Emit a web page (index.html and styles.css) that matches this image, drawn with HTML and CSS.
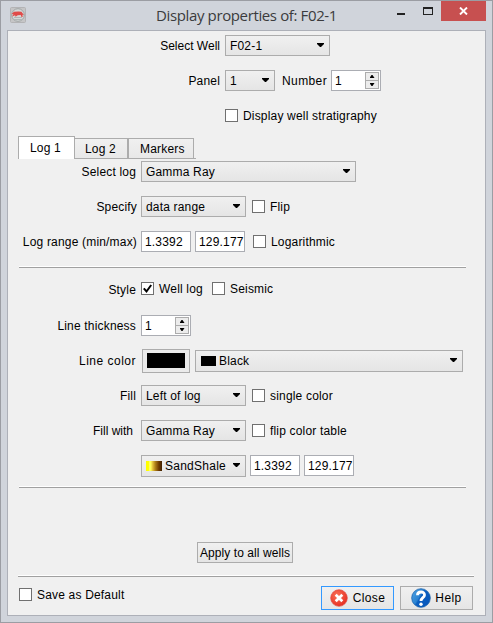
FILE: index.html
```html
<!DOCTYPE html>
<html lang="en">
<head>
<meta charset="utf-8">
<title>Display properties of: F02-1</title>
<link rel="stylesheet" href="styles.css">
</head>
<body>
<div class="window">
  <header class="titlebar">
    <svg class="app-icon" width="16" height="16" viewBox="0 0 16 16">
      <rect x=".5" y=".5" width="15" height="15" rx="1" fill="#c5c5c6" stroke="#b3b3b5"/>
      <circle cx="8" cy="8" r="6.3" fill="#d4d8d8" stroke="#a0a5a5"/>
      <path d="M3.500 12.500h9M4 10.500h8" stroke="#b0b6b6" fill="none"/>
      <path d="M1.500 7L4 4.800l4.500-.3 3 .2 2.500 3.500-1.600-.4.300 2.200h-1.200l-.8-2-3 .2-2.200 1.600-.4-1.500L2 9.600l1.500-2.300z" fill="#e04b49"/>
    </svg>
    <h1 class="title">Display properties of: F02-1</h1>
    <div class="controls">
      <svg width="37" height="20" viewBox="0 0 37 20" shape-rendering="crispEdges"><path d="M0 13h8v2H0z" fill="#222"/><path d="M26 7h10v8H26z" fill="#222"/><path d="M27 9h8v5H27z" fill="#d0d4db"/></svg>
      <div class="win-close"><svg width="9" height="8" viewBox="0 0 9 8"><path d="M1 .5l7 7M8 .5l-7 7" stroke="#fff" stroke-width="1.900"/></svg></div>
    </div>
  </header>
  <main class="client">
    <section class="group well">
      <div class="row"><span class="label plain">Select Well</span><div class="combo w105">F02-1</div></div>
      <div class="row"><span class="label">Panel</span><div class="combo w50">1</div><span class="number-label">Number</span><div class="spin">1<span class="spin-buttons"><i class="up"></i><i class="down"></i></span></div></div>
      <div class="row"><span class="label"></span><span class="check"></span><span class="check-label">Display well stratigraphy</span></div>
    </section>
    <nav class="tabs"><span class="tab active">Log 1</span><span class="tab second">Log 2</span><span class="tab third">Markers</span></nav>
    <section class="group log">
      <div class="row"><span class="label">Select log</span><div class="combo w215">Gamma Ray</div></div>
      <div class="row"><span class="label flush">Specify</span><div class="combo w105">data range</div><span class="check after"></span><span class="check-label">Flip</span></div>
      <div class="row"><span class="label flush">Log range (min/max)</span><div class="field">1.3392</div><div class="field">129.1773</div><span class="check wide"></span><span class="check-label">Logarithmic</span></div>
    </section>
    <hr class="rule">
    <section class="group style">
      <div class="row style-row"><span class="label style-label">Style</span><span class="check"><svg width="11" height="11" viewBox="0 0 11 11"><path d="M1.800 5.300l2.700 3.200L9.200 2" fill="none" stroke="#000" stroke-width="2"/></svg></span><span class="check-label well-log">Well log</span><span class="check"></span><span class="check-label">Seismic</span></div>
      <div class="row"><span class="label">Line thickness</span><div class="spin">1<span class="spin-buttons"><i class="up"></i><i class="down"></i></span></div></div>
      <div class="row color-row"><span class="label">Line color</span><div class="color-button"><span class="swatch"></span></div><div class="combo color-combo"><span class="chip"></span>Black</div></div>
      <div class="row"><span class="label">Fill</span><div class="combo w105">Left of log</div><span class="check after"></span><span class="check-label">single color</span></div>
      <div class="row"><span class="label fill-with">Fill with</span><div class="combo w105">Gamma Ray</div><span class="check after"></span><span class="check-label">flip color table</span></div>
      <div class="row table-row"><span class="label"></span><div class="combo w105 tall"><span class="ramp"></span>SandShale</div><div class="field">1.3392</div><div class="field">129.1773</div></div>
    </section>
    <hr class="rule">
    <div class="apply-row"><div class="button apply">Apply to all wells</div></div>
    <hr class="rule long">
    <footer class="footer">
      <span class="check"></span><span class="check-label">Save as Default</span>
      <div class="button close">
        <svg width="18" height="18" viewBox="0 0 18 18"><defs><radialGradient id="red" cx=".4" cy=".35" r=".7"><stop offset="0" stop-color="#fa7358"/><stop offset="1" stop-color="#e52b20"/></radialGradient></defs><circle cx="9" cy="9" r="8.300" fill="url(#red)" stroke="#df4d44" stroke-width=".7"/><path d="M5.700 5.700l6.600 6.600M12.300 5.700l-6.600 6.600" stroke="#fff" stroke-width="2.700"/></svg>Close</div>
      <div class="button help">
        <svg width="20" height="20" viewBox="0 0 20 20"><defs><linearGradient id="blue" x1="0" y1="0" x2="1" y2=".6"><stop offset="0" stop-color="#51a5e4"/><stop offset=".48" stop-color="#2b83d2"/><stop offset=".55" stop-color="#0b5fc0"/><stop offset="1" stop-color="#0757bc"/></linearGradient></defs><circle cx="10" cy="10" r="9.300" fill="url(#blue)" stroke="#1d65ad" stroke-width=".8"/><path d="M6.500 7.200C6.500 3 13.500 3 13.500 6.900c0 2.700-3.500 2.800-3.500 6" fill="none" stroke="#fff" stroke-width="2.800"/><circle cx="10" cy="16.200" r="1.700" fill="#fff"/></svg>Help</div>
    </footer>
  </main>
</div>
</body>
</html>
```

FILE: styles.css
```css
* { box-sizing: border-box; }

body {
  margin: 0;
  font: 12px/22px "Liberation Sans", Arial, sans-serif;
  letter-spacing: 0.18px;
  color: #000;
  white-space: nowrap;
}

.window {
  width: 493px;
  height: 623px;
  border: 1px solid #9b9da3;
  background: #d0d4db;
  padding: 0 6px;
}

.titlebar { display: flex; height: 29px; padding-left: 3px; }
.app-icon { margin-top: 6px; }
.title {
  margin: 0 0 0 130px;
  font: 15px/29px "Open Sans", sans-serif;
  color: #3b3b3d;
  letter-spacing: -0.37px;
  width: 190px;
}
.controls { display: flex; margin-left: auto; }
.controls > svg { margin: -1px 7px 0 0; }
.win-close {
  display: flex;
  align-items: center;
  justify-content: center;
  width: 45px;
  height: 20px;
  background: #c75050;
}

.client {
  height: 586px;
  border: 1px solid #adb0b8;
  background: #f0f0f0;
}

.group { display: flex; flex-direction: column; gap: 14px; }
.row { display: flex; align-items: center; height: 21px; }
.label {
  align-self: flex-start;
  width: 133px;
  padding-right: 5px;
  text-align: right;
}
.flush { padding-right: 4px; }
.plain { letter-spacing: 0; }
.fill-with { padding-right: 8px; letter-spacing: 0; }
.style-label { line-height: 24px; }

.well { padding-top: 4px; }
.well .label { width: 217px; }

.combo {
  position: relative;
  height: 21px;
  padding-left: 4px;
  line-height: 20px;
  border: 1px solid #acacac;
  background: linear-gradient(#f0f0f0, #e5e5e5);
}
.combo::after {
  content: "";
  position: absolute;
  right: 5px;
  top: 7px;
  width: 7px;
  height: 4px;
  background: #000;
  clip-path: polygon(0 0, 100% 0, 100% 25%, 57% 100%, 43% 100%, 0 25%);
}
.w50 { width: 50px; }
.w105 { width: 105px; }
.w215 { width: 215px; }
.number-label { align-self: flex-start; margin-left: 7px; width: 49px; letter-spacing: 0.4px; }

.spin, .field {
  display: flex;
  width: 50px;
  height: 21px;
  padding-left: 3px;
  line-height: 20px;
  border: 1px solid #abadb3;
  background: #fff;
  overflow: hidden;
}
.field + .field, .combo + .field { margin-left: 4px; }
.spin-buttons {
  display: flex;
  flex-direction: column;
  width: 14px;
  height: 17px;
  margin: 1px 1px 0 auto;
  border: 1px solid #acacac;
  background: #ececec;
}
.spin-buttons i { flex: 1; display: flex; align-items: center; justify-content: center; }
.spin-buttons i + i { border-top: 1px solid #acacac; }
.spin-buttons i::after { content: ""; width: 5px; height: 3px; background: #000; }
.spin-buttons .up::after { clip-path: polygon(40% 0, 60% 0, 100% 100%, 0 100%); }
.spin-buttons .down::after { clip-path: polygon(0 0, 100% 0, 60% 100%, 40% 100%); }

.check {
  display: flex;
  flex: none;
  width: 13px;
  height: 13px;
  border: 1px solid #707070;
  background: #fff;
}
.after { margin-left: 6px; }
.wide { margin-left: 8px; }
.check-label { align-self: flex-start; margin-left: 5px; }
.well-log { width: 53px; }

.tabs { display: flex; align-items: flex-end; height: 23px; margin: 10px 0 0 10px; }
.tabs::after { content: ""; width: 2px; height: 1px; background: #acacac; }
.tab {
  height: 21px;
  padding-left: 10px;
  line-height: 20px;
  border: 1px solid #acacac;
  border-left-width: 0;
  background: linear-gradient(#f0f0f0, #e8e8e8);
}
.active { width: 57px; height: 23px; padding-left: 11px; line-height: 22px; border-left-width: 1px; border-bottom: 0; background: #fff; }
.second { width: 53px; }
.third { width: 66px; padding-left: 11px; border-left-width: 1px; }

.log { margin-top: 2px; }

.rule {
  height: 2px;
  margin: 14px 0 0 11px;
  width: 447px;
  border: 0;
  border-top: 1px solid #fff;
  background: #a0a0a0;
}
.style { margin-top: 10px; }
.style-row { margin-bottom: 2px; }
.color-button {
  width: 48px;
  height: 24px;
  margin: 0 5px 0 1px;
  padding: 3px 4px;
  border: 1px solid #acacac;
  background: #ebebeb;
}
.swatch { display: block; width: 38px; height: 15px; background: #000; }
.color-row { height: 24px; margin: -1px 0 -2px; line-height: 24px; }
.color-row .label { letter-spacing: 0.5px; }
.color-combo { display: flex; align-items: center; width: 268px; height: 22px; padding-left: 5px; }
.chip { width: 15px; height: 10px; margin-right: 3px; background: #000; }
.table-row { height: 22px; align-items: flex-start; }
.tall { display: flex; align-items: center; height: 22px; letter-spacing: 0.25px; }
.ramp {
  width: 16px;
  height: 10px;
  margin-right: 3px;
  background: linear-gradient(90deg, #ff0 0 15%, #ffff60 22% 30%, #e8c840 40%, #b08018 58%, #703c00 80%, #402000);
}
.style + .rule { margin-top: 9px; }

.button {
  display: flex;
  align-items: center;
  justify-content: center;
  border: 1px solid #acacac;
  background: linear-gradient(#f0f0f0, #e5e5e5);
}
.apply-row { margin: 54px 0 0 189px; }
.apply { width: 96px; height: 21px; align-items: flex-start; line-height: 20px; letter-spacing: 0.08px; }
.long { margin: 12px 0 0 10px; width: 456px; }
.footer { display: flex; height: 24px; margin: 9px 12px 0 11px; }
.footer .check { margin-top: 2px; }
.footer .check-label { line-height: 18px; }
.footer .button { width: 73px; letter-spacing: 0.4px; }
.footer .close { margin-left: auto; border-color: #3399ff; }
.close svg { margin-right: 5px; }
.help { margin-left: 6px; }
.help svg { margin-right: 4px; }
```
